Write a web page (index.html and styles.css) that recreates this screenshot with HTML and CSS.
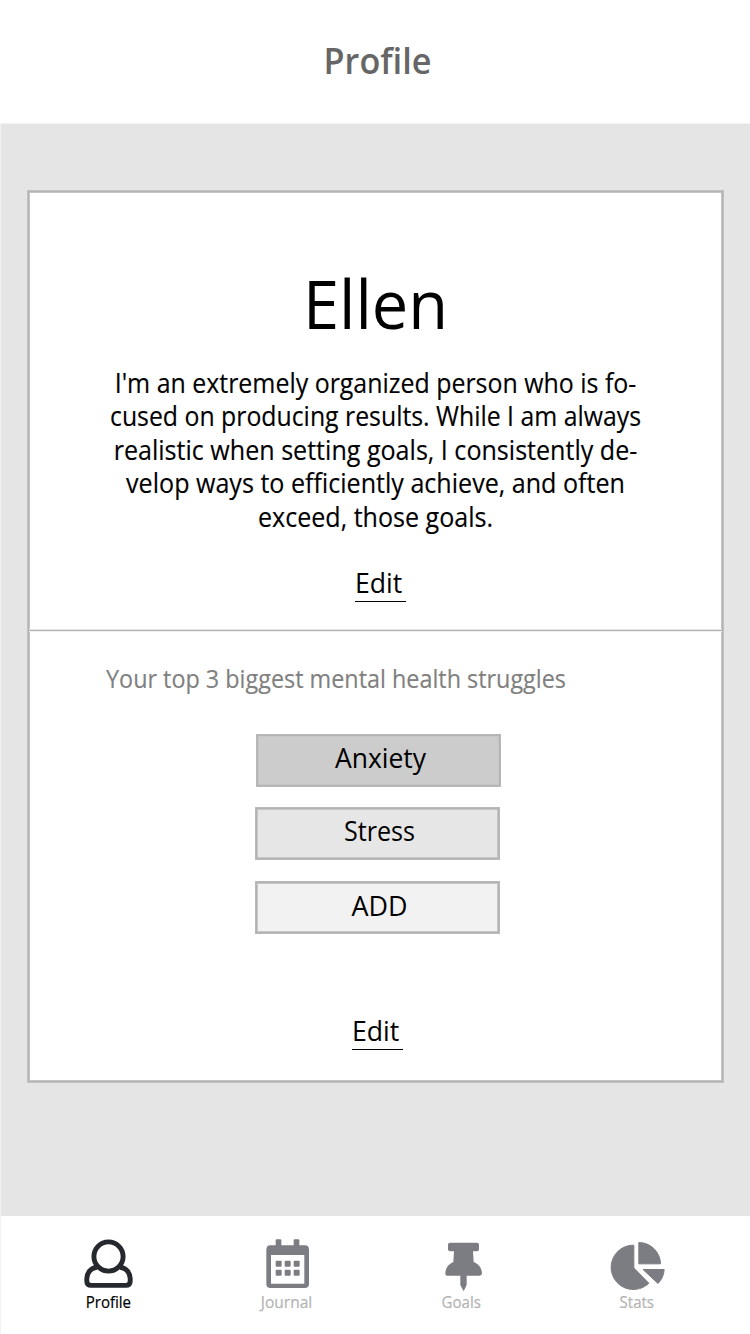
FILE: index.html
```html
<!DOCTYPE html>
<html lang="en">
<head>
<meta charset="utf-8">
<title>Profile</title>
<link rel="stylesheet" href="styles.css">
</head>
<body>
<div class="screen">
  <header class="header"><h1 class="title">Profile</h1></header>
  <main class="content">
    <article class="card">
      <section class="about">
        <h2 class="name">Ellen</h2>
        <p class="bio">
          <span class="line line-1">I'm an extremely organized person who is fo-</span>
          <span class="line line-2">cused on producing results. While I am always</span>
          <span class="line line-3">realistic when setting goals, I consistently de-</span>
          <span class="line line-4">velop ways to efficiently achieve, and often</span>
          <span class="line line-5">exceed, those goals.</span>
        </p>
        <a class="edit edit-about"><span class="edit-text">Edit</span></a>
      </section>
      <div class="divider"></div>
      <section class="struggles">
        <p class="prompt">Your top 3 biggest mental health struggles</p>
        <div class="tags">
          <div class="tag tag-first"><span class="tag-text anxiety">Anxiety</span></div>
          <div class="tag tag-second"><span class="tag-text stress">Stress</span></div>
          <div class="tag tag-third"><span class="tag-text add">ADD</span></div>
        </div>
        <a class="edit edit-struggles"><span class="edit-text">Edit</span></a>
      </section>
    </article>
  </main>
  <nav class="nav">
    <a class="nav-item active">
      <svg class="icon" viewBox="78 1236 60 56" fill="none" stroke="#25282d" stroke-width="4.9">
        <circle cx="108.5" cy="1256.5" r="14.6"/>
        <path d="M97 1267.2C90.5 1268 86.8 1273.2 86.8 1278.6V1281Q86.8 1285.4 91.2 1285.4H125.8Q130.2 1285.4 130.2 1281V1278.6C130.2 1273.2 126.5 1268 120 1267.2"/>
      </svg>
      <span class="label">Profile</span>
    </a>
    <a class="nav-item">
      <svg class="icon" viewBox="21 18 180 168" fill="#7b7d82">
        <rect x="77" y="28" width="17" height="30" rx="3"/>
        <rect x="131" y="28" width="17" height="30" rx="3"/>
        <path fill-rule="evenodd" d="M62 46H164Q177 46 177 59V161Q177 174 164 174H62Q49 174 49 161V59Q49 46 62 46ZM63 75V161H163V75Z"/>
        <rect x="77" y="92" width="18" height="18" rx="3"/>
        <rect x="104" y="92" width="18" height="18" rx="3"/>
        <rect x="131" y="92" width="18" height="18" rx="3"/>
        <rect x="77" y="119" width="18" height="18" rx="3"/>
        <rect x="104" y="119" width="18" height="18" rx="3"/>
        <rect x="131" y="119" width="18" height="18" rx="3"/>
      </svg>
      <span class="label journal">Journal</span>
    </a>
    <a class="nav-item">
      <svg class="icon" viewBox="6 18 180 168" fill="#7b7d82">
        <path d="M60 38H141Q147 38 147 44V58Q147 64 141 64H129L131 96C146 102 155 113 156 130Q156 137 149 137H110V165L101 184L91 165V137H52Q45 137 46 130C47 113 56 102 70 96L72 64H60Q54 64 54 58V44Q54 38 60 38Z"/>
      </svg>
      <span class="label goals">Goals</span>
    </a>
    <a class="nav-item">
      <svg class="icon" viewBox="21 18 180 168" fill="#7b7d82" stroke="#7b7d82" stroke-width="3" stroke-linejoin="round">
        <path d="M101.500 45.500V114L146.500 159.500A66.500 66.500 0 1 1 101.500 45.500Z"/>
        <path d="M116.500 37.500V101.500H181.500A65 65 0 0 0 116.500 37.500Z"/>
        <path d="M129 118.500H192.500A65 65 0 0 1 174 160.500Z"/>
      </svg>
      <span class="label stats">Stats</span>
    </a>
  </nav>
</div>
</body>
</html>
```

FILE: styles.css
```css
* { box-sizing: border-box; }

body {
  margin: 0;
  background: #fff;
  color: #000;
  font-family: "Open Sans", "Noto Sans", sans-serif;
}

h1, h2, p { margin: 0; font-weight: 400; }

.screen {
  display: flex;
  flex-direction: column;
  width: 750px;
  height: 1334px;
  overflow: hidden;
}

.header {
  height: 123px;
  padding-left: 5px;
  text-align: center;
}

.title {
  color: #666;
  font-size: 36.5px;
  font-weight: 600;
  line-height: 121px;
  transform: scaleX(.937);
}

.content {
  height: 1093px;
  padding: 66px 26px 0;
  background: #e5e5e5;
  border-top: 1px solid #f3f3f3;
  border-left: 1px solid #f3f3f3;
}

.card {
  width: 697px;
  height: 893px;
  background: #fff;
  border: 1px solid #c1c1c1;
  box-shadow: inset 0 0 0 1px #b3b3b3, inset 0 0 0 2px #c4c4c4;
}

.about {
  height: 439px;
  padding-top: 72px;
  text-align: center;
}

.name {
  font-size: 68px;
  line-height: 80px;
  transform: scaleX(.955);
}

.bio {
  margin-top: 23px;
  font-size: 27px;
  line-height: 33.4px;
  -webkit-text-stroke: .15px currentColor;
}

.line {
  display: block;
  white-space: nowrap;
}

.line-1 { transform: scaleX(.923); }
.line-2 { transform: scaleX(.919); }
.line-3 { transform: scaleX(.929); }
.line-4 { transform: scaleX(.929); }
.line-5 { transform: scaleX(.928); }

.edit {
  display: block;
  width: 51px;
  height: 35px;
  border-bottom: 1px solid #000;
  font-size: 27.3px;
  line-height: 31px;
  text-align: left;
}

.edit-about { margin: 34px 0 0 327px; }
.edit-struggles { margin: 81px 0 0 324px; }

.edit-text {
  display: block;
  margin-left: -.5px;
  transform: scaleX(.975);
  transform-origin: left;
}

.divider {
  height: 1px;
  margin: 0 1px;
  background: #b3b3b3;
  box-shadow: 0 1px #f0f0f0, 0 -1px #e6e6e6;
}

.prompt {
  margin: 30px 0 0 78px;
  color: #808080;
  font-size: 25px;
  line-height: 34px;
  white-space: nowrap;
  transform: scaleX(.935);
  transform-origin: left;
  -webkit-text-stroke: .15px currentColor;
}

.tags {
  display: grid;
  justify-items: start;
  margin: 39px 0 0 227px;
}

.tag {
  width: 245px;
  height: 53px;
  padding-left: 4px;
  border: 1px solid #b9b9b9;
  box-shadow: inset 0 0 0 1px #b3b3b3, inset 0 0 0 2px #c6c6c6;
  font-size: 27.3px;
  line-height: 46px;
  text-align: center;
}

.tag-first { margin-left: 1px; background: #ccc; }
.tag-second { margin-top: 20px; background: #e6e6e6; }
.tag-third { margin-top: 21px; background: #f2f2f2; line-height: 47px; }

.tag-text { display: block; }
.anxiety { transform: scaleX(.97); }
.stress { transform: scaleX(.92); }
.add { transform: scaleX(.985); }

.nav {
  display: grid;
  grid-template-columns: 175px 182px 168px 182px;
  height: 118px;
  padding: 20px 0 0 19.5px;
  border-left: 1px solid #f3f3f3;
}

.nav-item {
  display: flex;
  flex-direction: column;
  align-items: center;
  color: #b3b3b3;
}

.active { color: #000; }

.icon {
  width: 60px;
  height: 56px;
}

.label {
  font-size: 15.5px;
  line-height: 20px;
  transform: scaleX(.97);
  -webkit-text-stroke: .2px currentColor;
}

.journal { transform: scaleX(1); }
```
